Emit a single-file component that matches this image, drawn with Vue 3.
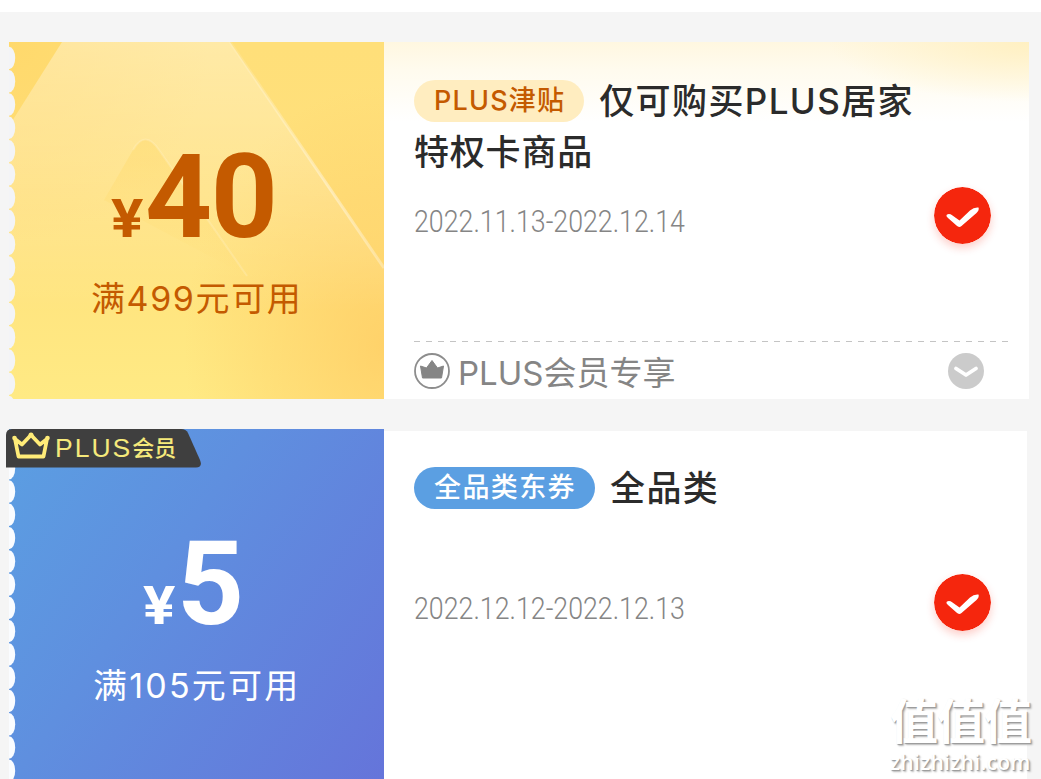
<template>
    <div class="coupon_page">
        <div class="top_bar"></div>

        <div v-for="item in coupons" :key="item.theme" class="coupon" :class="item.theme">
            <div class="coupon_left">
                <svg v-if="item.theme === 'gold'" class="shine" viewBox="0 0 375 357">
                    <defs>
                        <linearGradient id="beam" x1="0.5" y1="0" x2="0.5" y2="1">
                            <stop offset="0" stop-color="#fff" stop-opacity="0.34" />
                            <stop offset="0.45" stop-color="#fff" stop-opacity="0.2" />
                            <stop offset="1" stop-color="#fff" stop-opacity="0" />
                        </linearGradient>
                        <linearGradient id="edge" x1="0" y1="0" x2="1" y2="1">
                            <stop offset="0" stop-color="#fff" stop-opacity="0.1" />
                            <stop offset="0.65" stop-color="#fff" stop-opacity="0.4" />
                            <stop offset="1" stop-color="#fff" stop-opacity="0.3" />
                        </linearGradient>
                        <linearGradient id="peak" x1="0" y1="0" x2="0" y2="1">
                            <stop offset="0" stop-color="#ffd968" stop-opacity="0.45" />
                            <stop offset="1" stop-color="#ffd968" stop-opacity="0" />
                        </linearGradient>
                    </defs>
                    <path d="M53 0H221L375 226V270H0V84Z" fill="url(#beam)" />
                    <path d="M221 0L375 226" stroke="url(#edge)" stroke-width="3" fill="none" />
                    <path d="M95 158L124 108Q136 87 150 108L238 234Z" fill="url(#peak)" />
                    <path d="M124 108Q136 87 150 108L238 234" stroke="#fff" stroke-opacity="0.16" stroke-width="2" fill="none" />
                </svg>
                <svg class="teeth" width="7" height="357">
                    <ellipse v-for="n in 16" :key="n" cx="0" :cy="item.teethStart + (n - 1) * 23.27" rx="6.2" ry="11.2" />
                </svg>

                <div v-if="item.vip" class="vip_tag">
                    <svg class="vip_bg" width="195" height="39" viewBox="0 0 195 39">
                        <path d="M6 0H175Q180 0 182 4L194 31Q197 38.500 190 38.500H0V6Q0 0 6 0Z" fill="#3f3f3f" />
                    </svg>
                    <svg class="vip_crown" width="38" height="28" viewBox="0 0 38 28">
                        <path d="M3 7L10 12.500L19 3L28 12.500L35 7L31.500 24.500H6.500Z" fill="none" stroke="#ffec78" stroke-width="3.800" stroke-linejoin="round" />
                        <circle cx="2.500" cy="6" r="2.300" fill="#ffec78" />
                        <circle cx="19" cy="3" r="2.500" fill="#ffec78" />
                        <circle cx="35.500" cy="6" r="2.300" fill="#ffec78" />
                    </svg>
                    <span class="vip_en">PLUS</span>
                    <span class="vip_cn">会员</span>
                </div>

                <div class="price">
                    <span class="unit">¥</span>
                    <span class="num">{{ item.price }}</span>
                </div>
                <div class="limit">{{ item.limit }}</div>
            </div>

            <div class="coupon_right">
                <div class="title">
                    <span class="label">{{ item.label }}</span>
                    <span class="title_first">{{ item.title[0] }}</span>
                    <template v-if="item.title[1]"><br>{{ item.title[1] }}</template>
                </div>
                <div class="date_row">
                    <span class="date">{{ item.date }}</span>
                    <svg class="check" width="57" height="57" viewBox="0 0 57 57">
                        <circle cx="28.500" cy="28.500" r="28.500" fill="#f5260d" />
                        <path d="M12.500 28Q15 26 18.500 28.500L25.500 33.500L36 23.500Q40 20 44.500 20.500Q45.500 23 42.500 26L27.500 39Q25 41 22.500 38.500L14 31Q12 29.500 12.500 28Z" fill="#fff" />
                    </svg>
                </div>
                <template v-if="item.foot">
                    <svg class="dash" width="596" height="2">
                        <path d="M0 0.500H596" stroke="#c4c4c4" stroke-width="1" stroke-dasharray="6 6" />
                    </svg>
                    <div class="foot">
                        <svg width="36" height="36" viewBox="0 0 36 36">
                            <circle cx="18" cy="18" r="17" fill="#fff" stroke="#8d8d8d" stroke-width="1.800" />
                            <path d="M6.500 13L12.500 15L18 7.500L23.500 15L29.500 13L27.500 25H8.500Z" fill="#858585" stroke="#858585" stroke-linejoin="round" />
                        </svg>
                        <span class="foot_text">{{ item.foot }}</span>
                        <svg width="36" height="36" viewBox="0 0 36 36">
                            <circle cx="18" cy="18" r="18" fill="#cbcbcb" />
                            <path d="M8 15.500L18 22L28 15.500" stroke="#fff" stroke-width="3.800" stroke-linecap="round" stroke-linejoin="round" fill="none" />
                        </svg>
                    </div>
                </template>
            </div>
        </div>

        <div class="watermark">
            <div class="mark_cn">值值值</div>
            <div class="mark_en">zhizhizhi.com</div>
        </div>
    </div>
</template>

<script setup>
const coupons = [
    {
        theme: 'gold',
        price: '40',
        limit: '满499元可用',
        label: 'PLUS津贴',
        title: ['仅可购买PLUS居家', '特权卡商品'],
        date: '2022.11.13-2022.12.14',
        foot: 'PLUS会员专享',
        teethStart: 16,
    },
    {
        theme: 'blue',
        price: '5',
        limit: '满105元可用',
        label: '全品类东券',
        title: ['全品类'],
        date: '2022.12.12-2022.12.13',
        vip: true,
        teethStart: 16,
    },
]
</script>

<style>
body {
    margin: 0;
    background: #f5f5f5;
}
</style>

<style scoped>
.coupon_page {
    position: relative;
    width: 1041px;
    height: 779px;
    overflow: hidden;
    background: #f5f5f5;
    font-family: Inter, "Noto Sans CJK SC", sans-serif;
}

.top_bar {
    height: 12px;
    margin-bottom: 30px;
    background: #fff;
}

.coupon {
    display: flex;
    width: 1020px;
    height: 357px;
    margin: 0 0 30px 9px;
}

.coupon_left {
    position: relative;
    box-sizing: border-box;
    flex: none;
    width: 375px;
    padding-top: 90px;
}

.gold .coupon_left {
    color: #c45a00;
    background: radial-gradient(ellipse 200px 260px at 100% 85%, rgba(255, 203, 98, 0.75), rgba(255, 203, 98, 0) 100%),
        radial-gradient(ellipse 200px 200px at 0 0, #ffd96c, rgba(255, 217, 108, 0)),
        linear-gradient(180deg, #ffdf79 0%, #ffe07b 45%, #ffea84 100%);
}

.blue .coupon_left {
    color: #fff;
    background: linear-gradient(125deg, #5b9fe2 0%, #5f8fdf 40%, #6574da 100%);
}

.shine {
    position: absolute;
    left: 0;
    top: 0;
    width: 375px;
    height: 357px;
}

.teeth {
    position: absolute;
    left: 0;
    top: 0;
    fill: #f3f4f7;
}

.blue .teeth {
    fill: #fafcff;
}

.price {
    position: relative;
    display: flex;
    align-items: baseline;
    height: 130px;
    font-family: Roboto, sans-serif;
    font-weight: 700;
    line-height: 130px;
}

.gold .price {
    padding-left: 102px;
}

.blue .price {
    padding-left: 134px;
}

.unit {
    width: 34px;
    font-size: 53px;
    transform: scaleX(1.14);
    transform-origin: 0 50%;
}

.num {
    font-size: 117px;
    letter-spacing: -1.5px;
}

.limit {
    position: relative;
    padding-left: 82px;
    margin-top: 12px;
    font-size: 34px;
    line-height: 50px;
    letter-spacing: 1.6px;
    white-space: nowrap;
}

.blue .limit {
    padding-left: 84px;
    letter-spacing: 2.2px;
}

.coupon_right {
    position: relative;
    box-sizing: border-box;
    flex: none;
    width: 645px;
    padding: 31px 20px 0 30px;
    background: #fff;
}

.gold .coupon_right {
    background: radial-gradient(ellipse 200px 60px at 100% 0, #fff0c2, rgba(255, 240, 194, 0)),
        linear-gradient(180deg, #fff7e0 0, #fffbee 28px, #fff 80px);
}

.blue .coupon_right {
    width: 643px;
    margin-top: 2px;
    padding: 29px 18px 0 30px;
}

.title {
    height: 105px;
    color: #2b2b2b;
    font-size: 35px;
    font-weight: 500;
    line-height: 51px;
    letter-spacing: 0.8px;
    white-space: nowrap;
}

.label {
    display: inline-block;
    box-sizing: border-box;
    height: 42px;
    margin-right: 15px;
    padding: 0 19px 0 20px;
    border-radius: 21px;
    color: #c45a00;
    background: #ffedc0;
    font-size: 27px;
    line-height: 41px;
    letter-spacing: 1.2px;
    vertical-align: middle;
}

.blue .label {
    color: #fff;
    background: #5b9fe2;
    letter-spacing: 1.4px;
}

.title_first {
    letter-spacing: 1.4px;
    vertical-align: middle;
}

.date_row {
    display: flex;
    justify-content: space-between;
    padding: 9px 18px 0 0;
}

.date {
    height: 68px;
    color: #858585;
    font-family: Roboto, sans-serif;
    font-size: 31.5px;
    font-weight: 300;
    line-height: 70px;
    transform: scaleX(0.85);
    transform-origin: 0 50%;
}

.check {
    border-radius: 50%;
    box-shadow: 0 4px 8px rgba(245, 38, 13, 0.22);
}

.dash {
    display: block;
    margin-top: 86px;
}

.foot {
    display: flex;
    align-items: center;
    height: 56px;
    padding-right: 25px;
}

.foot_text {
    flex: 1;
    margin-left: 8px;
    color: #858585;
    font-size: 33px;
    font-weight: 400;
    line-height: 50px;
    padding-top: 3px;
}

.vip_tag {
    position: absolute;
    left: -3px;
    top: 0;
    display: flex;
    align-items: center;
    width: 195px;
    height: 38px;
    color: #f5e97b;
}

.vip_bg {
    position: absolute;
    left: 0;
    top: 0;
}

.vip_crown {
    position: relative;
    margin: -4px 0 0 6px;
}

.vip_en {
    position: relative;
    margin-left: 5px;
    font-family: "Liberation Sans", sans-serif;
    font-size: 26.5px;
    letter-spacing: 2px;
}

.vip_cn {
    position: relative;
    margin-top: -4px;
    font-size: 22px;
    font-weight: 500;
}

.watermark {
    position: absolute;
    right: 10px;
    bottom: 4px;
    color: #fff;
    text-shadow: 1px 1px 1px #999, 2px 2px 2px #bbb;
    white-space: nowrap;
}

.mark_cn {
    font-size: 48px;
    font-weight: 700;
    line-height: 50px;
    letter-spacing: -1px;
    margin-bottom: 2px;
}

.mark_en {
    font-family: "Open Sans", sans-serif;
    font-size: 21px;
    font-weight: 600;
    line-height: 26px;
    letter-spacing: 0.3px;
}
</style>
